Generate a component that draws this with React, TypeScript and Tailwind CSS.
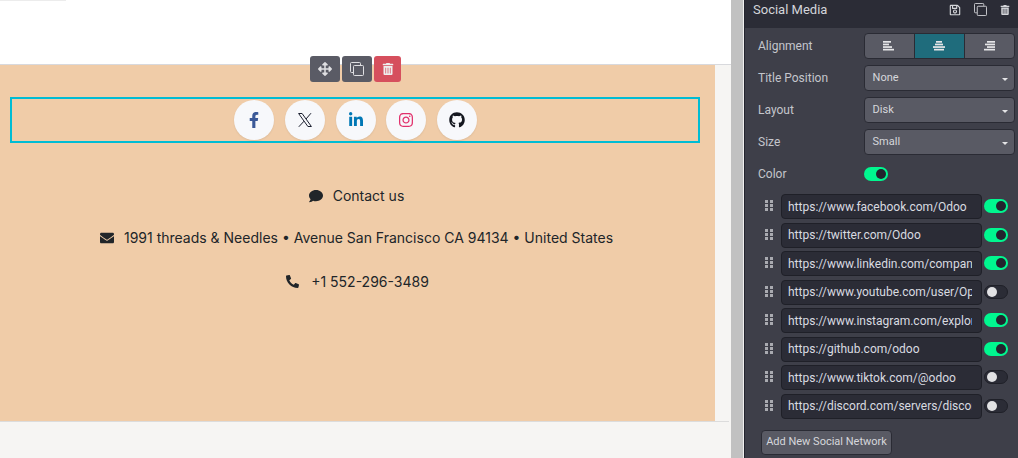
import React from "react";
import { FaFacebookF, FaLinkedinIn, FaInstagram, FaGithub, FaComment, FaEnvelope, FaPhone, FaArrowsAlt, FaTrashAlt, FaRegSave } from "react-icons/fa";

function XLogo() {
  return (
    <svg width="16" height="16" viewBox="0 0 16 16" fill="none" stroke="#1a1e2e" strokeWidth="1">
      <path d="M1.6 1.5h3.5l9.3 13h-3.5z" />
      <path d="M14 1.2L9 7M7 9.2L1.8 14.8" />
    </svg>
  );
}

function CloneIcon({ size }: { size: number }) {
  return (
    <svg width={size} height={size} viewBox="0 0 14 14" fill="none" stroke="currentColor" strokeWidth="1">
      <path d="M3 10.5H1.5a1 1 0 0 1-1-1v-8a1 1 0 0 1 1-1h8a1 1 0 0 1 1 1V3" />
      <rect x="3.5" y="3.5" width="10" height="10" rx="1" />
    </svg>
  );
}

function AlignIcon({ rows }: { rows: [number, number][] }) {
  return (
    <svg width="12" height="10" viewBox="0 0 12 10" fill="currentColor">
      {rows.map(([x, w], i) => (
        <rect key={i} x={x} y={i * 2.6} width={w} height="1.7" />
      ))}
    </svg>
  );
}

const socials = [
  <FaFacebookF key="f" className="text-[#3b5998]" size={16} />,
  <XLogo key="x" />,
  <FaLinkedinIn key="l" className="text-[#0077b5]" size={16} />,
  <FaInstagram key="i" className="text-[#e1306c]" size={16} />,
  <FaGithub key="g" className="text-[#14171f]" size={16} />,
];

const links = [
  ["https://www.facebook.com/Odoo", true],
  ["https://twitter.com/Odoo", true],
  ["https://www.linkedin.com/company/odoo", true],
  ["https://www.youtube.com/user/OpenERPonline", false],
  ["https://www.instagram.com/explore/tags/odoo/", true],
  ["https://github.com/odoo", true],
  ["https://www.tiktok.com/@odoo", false],
  ["https://discord.com/servers/discord-odoo", false],
] as const;

function Toggle({ on, className = "" }: { on: boolean; className?: string }) {
  return (
    <div className={`flex h-[14px] w-[24px] shrink-0 items-center rounded-full px-[2px] ${on ? "justify-end bg-[#00f78f]" : "justify-start border border-[#1f2028] bg-[#2b2c36]"} ${className}`}>
      <div className={`h-[10px] w-[10px] rounded-full ${on ? "bg-[#23242e]" : "bg-[#e2e2e4]"}`} />
    </div>
  );
}

function Grip() {
  return (
    <div className="grid w-[8px] shrink-0 grid-cols-2 gap-[1px]">
      {[0, 1, 2, 3, 4, 5].map((i) => (
        <div key={i} className="h-[3px] w-[3px] bg-[#a9aab0]" />
      ))}
    </div>
  );
}

function SelectRow({ label, value }: { label: string; value: string }) {
  return (
    <div className="flex h-[26px] items-center">
      <div className="w-[106px] text-[12px] text-[#c4c6cc]">{label}</div>
      <div className="flex h-[26px] w-[152px] items-center justify-between rounded-[4px] border border-[#2a2b34] bg-[#595a64] pl-[8px] pr-[6px] text-[11px] text-[#d6d7db]">
        <span>{value}</span>
        <span className="mt-[3px] h-0 w-0 border-x-[3px] border-t-[3px] border-x-transparent border-t-[#e4e4e6]" />
      </div>
    </div>
  );
}

export default function App() {
  return (
    <div className="flex h-[458px] w-[1018px] overflow-hidden bg-[#f6f5f3] font-['Inter',sans-serif]">
      <div className="flex w-[731px] shrink-0 flex-col">
        <div className="relative h-[65px] shrink-0 border-b border-[#d8d9dd] bg-white">
          <div className="absolute left-0 top-0 h-[1px] w-[66px] bg-[#ececec]" />
        </div>
        <div className="flex">
          <section className="relative h-[356px] w-[715px] bg-[#f0cca8] pt-[32px]">
            <div className="absolute left-[310px] top-[-9px] flex gap-[2px]">
              <div className="flex h-[26px] w-[30px] items-center justify-center rounded-[3px] bg-[#5a5b65] text-[#dfdfe2]"><FaArrowsAlt size={14} /></div>
              <div className="flex h-[26px] w-[30px] items-center justify-center rounded-[3px] bg-[#5a5b65] text-[#dfdfe2]"><CloneIcon size={14} /></div>
              <div className="flex h-[26px] w-[27px] items-center justify-center rounded-[3px] bg-[#d64f5d] text-[#eee]"><FaTrashAlt size={12} /></div>
            </div>
            <div className="mx-[10px] flex h-[46px] w-[690px] items-center justify-center gap-[10.75px] border-2 border-[#00bcd4] pl-[1px]">
              {socials.map((icon, i) => (
                <div key={i} className="flex h-[40px] w-[40px] items-center justify-center rounded-full bg-[#f7f8fb] shadow-[0_1px_2px_rgba(0,0,0,0.08)]">{icon}</div>
              ))}
            </div>
            <div className="mt-[42px] flex flex-col items-center pr-[2px] text-[14px] leading-[21px] text-[#212529]">
              <div className="flex h-[21px] items-center gap-[10px]"><FaComment size={14} /><span>Contact us</span></div>
              <div className="mt-[21px] flex h-[21px] items-center gap-[10px]"><FaEnvelope size={14} /><span>1991 threads &amp; Needles • Avenue San Francisco CA 94134 • United States</span></div>
              <div className="ml-[2px] mt-[23px] flex h-[21px] items-center gap-[12px]"><FaPhone size={13} className="-scale-x-100" /><span>+1 552-296-3489</span></div>
            </div>
          </section>
        </div>
        <div className="h-[1px] w-[729px] bg-[#dcdcdc]" />
      </div>
      <div className="w-[12px] shrink-0 bg-[#c1c1c1]" />
      <div className="w-[1px] shrink-0 bg-[#f0f0f0]" />
      <aside className="flex w-[274px] flex-col border-l border-[#23242e] bg-[#3e3f49] font-['Roboto',sans-serif]">
        <div className="flex h-[28px] shrink-0 items-center justify-between bg-[#2b2c36] pl-[8px] pr-[8px]">
          <span className="-mt-[9px] text-[13px] text-[#d3d5da]">Social Media</span>
          <div className="-mt-[9px] flex items-center gap-[13px] text-[#d4d5d9]">
            <FaRegSave size={12} /><CloneIcon size={13} /><FaTrashAlt size={10} />
          </div>
        </div>
        <div className="flex flex-col gap-[6px] pl-[13px] pr-[3px] pt-[5px]">
          <div className="flex h-[26px] items-center">
            <div className="w-[106px] text-[12px] text-[#c4c6cc]">Alignment</div>
            <div className="flex h-[26px] w-[152px] overflow-hidden rounded-[4px] border border-[#2a2b34] bg-[#595a64] text-[#e6e6e8]">
              <div className="flex flex-1 items-center justify-center"><AlignIcon rows={[[0, 8], [0, 6], [0, 9], [0, 11]]} /></div>
              <div className="flex w-[51px] items-center justify-center border-x border-[#2a2b34] bg-[#1f6c7c]"><AlignIcon rows={[[3, 6], [2, 8], [0, 12], [1, 10]]} /></div>
              <div className="flex flex-1 items-center justify-center"><AlignIcon rows={[[4, 8], [2, 10], [4, 8], [1, 11]]} /></div>
            </div>
          </div>
          <SelectRow label="Title Position" value="None" />
          <SelectRow label="Layout" value="Disk" />
          <SelectRow label="Size" value="Small" />
          <div className="flex h-[26px] items-center">
            <div className="w-[106px] text-[12px] text-[#c4c6cc]">Color</div>
            <Toggle on />
          </div>
        </div>
        <div className="mt-[7px] flex flex-col gap-[3.5px] pl-[20px] pr-[9px]">
          {links.map(([url, on]) => (
            <div key={url} className="flex h-[25px] items-center">
              <div className="-mt-[2px] w-[16px]"><Grip /></div>
              <div className="flex h-[25px] w-[201px] items-center rounded-[4px] border border-[#1f2028] bg-[#2b2c36] pl-[6px] pr-[9px] text-[12px] text-[#d9dbe0]">
                <span className="block w-full overflow-hidden whitespace-nowrap">{url}</span>
              </div>
              <Toggle on={on} className="-mt-[1px] ml-[2px]" />
            </div>
          ))}
        </div>
        <div className="ml-[16px] mt-[11px] flex h-[25px] w-[131px] items-center justify-center rounded-[4px] border border-[#2a2b34] bg-[#595a64] text-[11px] text-[#d6d7db]">
          Add New Social Network
        </div>
      </aside>
    </div>
  );
}
